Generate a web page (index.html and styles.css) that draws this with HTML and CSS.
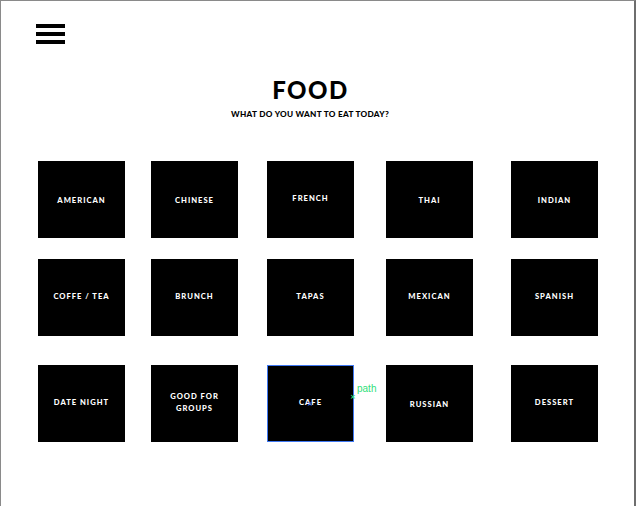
FILE: index.html
```html
<!DOCTYPE html>
<html>
<head>
<meta charset="utf-8">
<link rel="stylesheet" href="styles.css">
</head>
<body>
<div class="frame">
  <header class="topbar">
    <div class="burger"><span></span><span></span><span></span></div>
  </header>
  <div class="heading">
    <h1 class="title">FOOD</h1>
    <p class="subtitle">WHAT DO YOU WANT TO EAT TODAY?</p>
  </div>
  <div class="grid">
    <div class="tile c1">AMERICAN</div>
    <div class="tile c2">CHINESE</div>
    <div class="tile c3 up">FRENCH</div>
    <div class="tile c4">THAI</div>
    <div class="tile c5">INDIAN</div>

    <div class="tile c1 up">COFFE / TEA</div>
    <div class="tile c2 up">BRUNCH</div>
    <div class="tile c3 up">TAPAS</div>
    <div class="tile c4 up">MEXICAN</div>
    <div class="tile c5 up">SPANISH</div>

    <div class="tile c1 up">DATE NIGHT</div>
    <div class="tile c2 up">GOOD FOR<br>GROUPS</div>
    <div class="tile c3 up selected"><span class="label">CAFE</span>
      <span class="mark mark-blue">×</span>
      <span class="mark mark-green">×</span>
      <span class="path-label">path</span>
    </div>
    <div class="tile c4">RUSSIAN</div>
    <div class="tile c5 up">DESSERT</div>
  </div>
</div>
</body>
</html>
```
FILE: styles.css
```css
html, body {
  margin: 0;
  padding: 0;
  background: #ffffff;
}
body {
  font-family: "Lato", "Liberation Sans", sans-serif;
}
.frame {
  box-sizing: border-box;
  width: 636px;
  height: 506px;
  border-top: 1px solid #8a8a8a;
  border-left: 1px solid #8a8a8a;
  border-right: 2px solid #6e6e6e;
  background: #fff;
}
.topbar {
  padding: 23px 0 0 35px;
  height: 21px;
}
.burger {
  display: flex;
  flex-direction: column;
  gap: 4px;
  width: 29px;
}
.burger span {
  display: block;
  height: 4px;
  background: #000;
}
.heading {
  text-align: center;
  margin-top: 33px;
  padding-right: 15px;
}
.title {
  margin: 0;
  font-family: "Lato", sans-serif;
  font-weight: 900;
  font-size: 24px;
  line-height: 24px;
  letter-spacing: 1.5px;
  color: #000;
  padding-left: 1px;
}
.subtitle {
  margin: 7px 0 0;
  font-weight: 900;
  font-size: 8.2px;
  line-height: 10px;
  letter-spacing: 0.3px;
  color: #000;
}
.grid {
  display: grid;
  grid-template-columns: 87px 26px 87px 29px 87px 32px 87px 38px 87px;
  grid-template-rows: 77px 21px 77px 29px 77px;
  margin: 42px 0 0 37px;
}
.tile {
  position: relative;
  background: #000;
  color: #fff;
  display: flex;
  align-items: center;
  justify-content: center;
  text-align: center;
  font-weight: 900;
  font-size: 7.6px;
  line-height: 12px;
  letter-spacing: 1px;
  box-sizing: border-box;
}
.tile.up { padding-bottom: 4px; }
.c1 { grid-column: 1; }
.c2 { grid-column: 3; }
.c3 { grid-column: 5; }
.c4 { grid-column: 7; }
.c5 { grid-column: 9; }
.grid > .tile:nth-child(-n+5) { grid-row: 1; }
.grid > .tile:nth-child(n+6):nth-child(-n+10) { grid-row: 3; }
.grid > .tile:nth-child(n+11) { grid-row: 5; }
.tile.selected {
  border: 1px solid #3f78f2;
}
.mark {
  position: absolute;
  font-size: 7px;
  line-height: 7px;
  font-family: "DejaVu Sans", sans-serif;
  letter-spacing: 0;
}
.mark-blue {
  color: #3f78f2;
  left: 39px;
  top: 35px;
}
.mark-green {
  color: #2fe07a;
  left: 82px;
  top: 28px;
}
.path-label {
  position: absolute;
  left: 89px;
  top: 17px;
  color: #2fe07a;
  font-family: "Liberation Sans", sans-serif;
  font-weight: normal;
  font-size: 10px;
  letter-spacing: 0;
  line-height: 12px;
}
```
